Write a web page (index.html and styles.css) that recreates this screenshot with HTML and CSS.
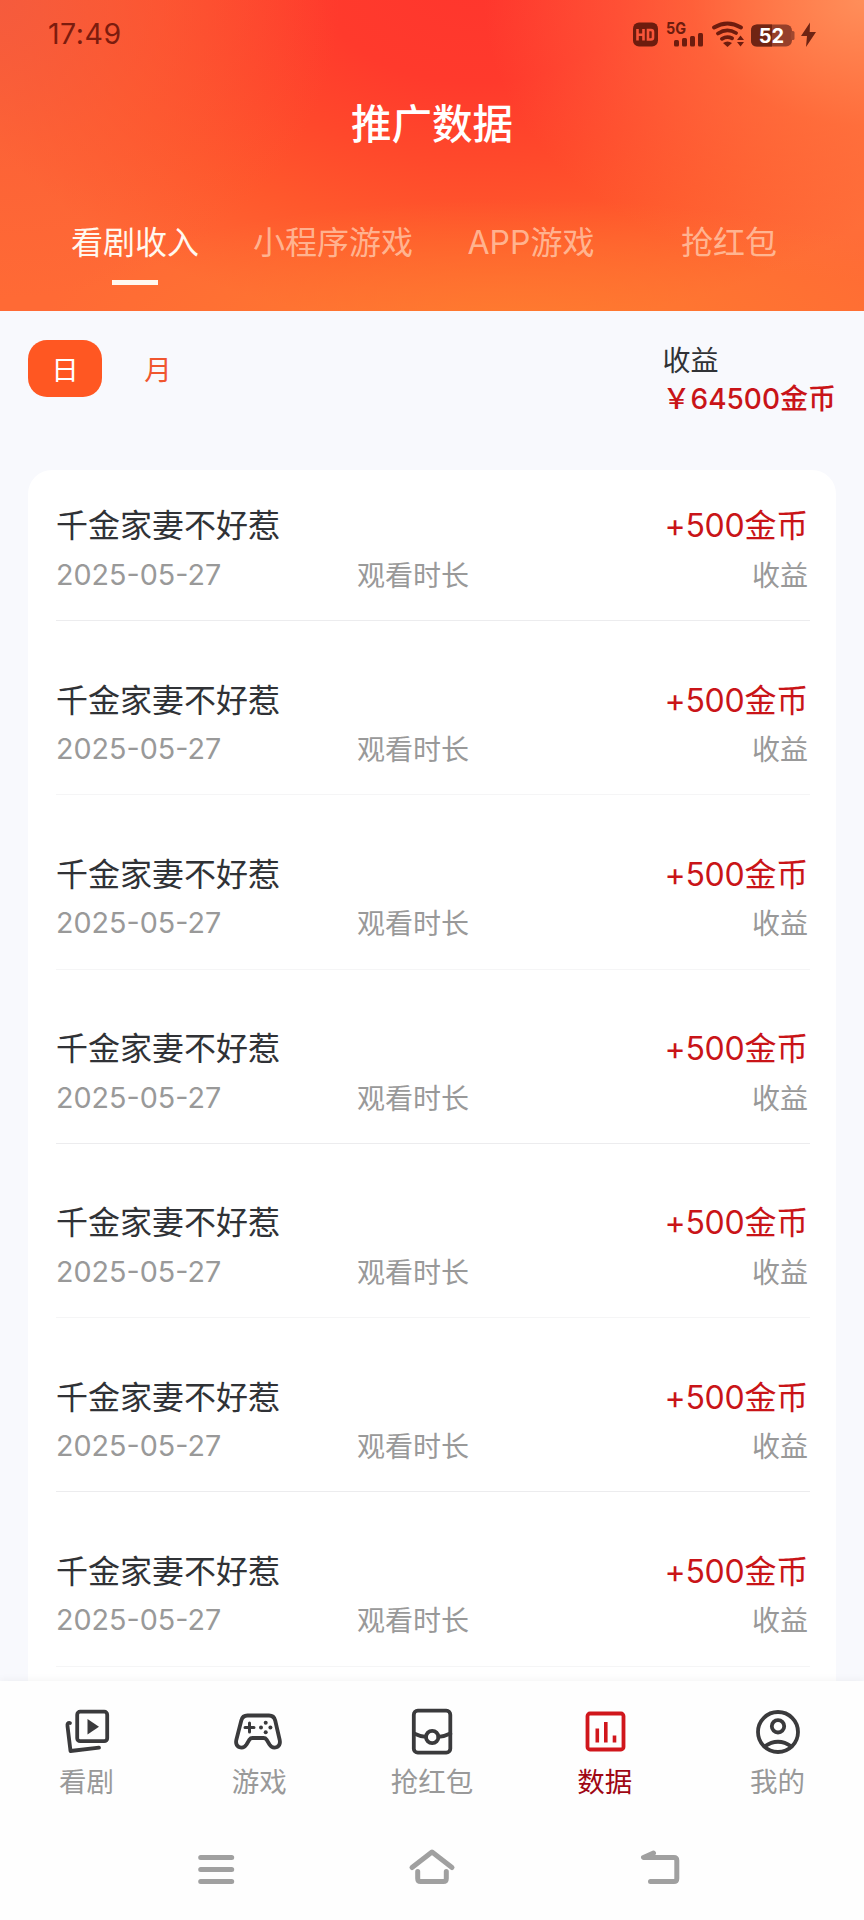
FILE: index.html
```html
<!DOCTYPE html>
<html lang="zh-CN">
<head>
<meta charset="utf-8">
<title>推广数据</title>
<link rel="stylesheet" href="styles.css">
</head>
<body>
<div class="app">
  <header class="hero">
    <div class="status">
      <span class="clock">17:49</span>
      <svg class="status-icons" viewBox="0 0 190 30" width="190" height="30">
        <g fill="#6e1c0e">
          <rect x="1" y="3.500" width="25" height="24" rx="6"/>
          <rect x="42" y="21" width="5" height="6.500" rx="1.500"/>
          <rect x="50" y="19" width="5" height="8.500" rx="1.500"/>
          <rect x="58" y="17" width="5" height="10.500" rx="1.500"/>
          <rect x="66" y="14" width="5" height="13.500" rx="1.500"/>
          <path d="M91 24l4.500 4 4.500-4q-4.500-3-9 0z"/>
          <path d="M105 21l3.500-4.500 3.500 4.500zM105 23l3.500 4.500 3.500-4.500z"/>
        </g>
        <path d="M5.500 10v11.500M11.500 10v11.500M5.500 15.800h6M16 11h3q2 0 2 2v5.500q0 2-2 2h-3z" fill="none" stroke="#f9553a" stroke-width="2.600"/>
        <text class="net" x="34" y="15" textLength="20" lengthAdjust="spacingAndGlyphs">5G</text>
        <g fill="none" stroke="#6e1c0e" stroke-width="3.800" stroke-linecap="round">
          <path d="M82 8.500q13.500-8 27 0M86 14.500q9-6 18-.5M90 19.800q5-3 10-.5"/>
        </g>
        <rect x="119" y="5.500" width="41" height="22" rx="6" fill="#96402a"/>
        <path d="M125 5.500h15v22h-15q-6 0-6-6v-10q0-6 6-6z" fill="#702413"/>
        <rect x="159" y="12" width="3.500" height="9" rx="1.500" fill="#a04830"/>
        <text class="level" x="139.500" y="23.700">52</text>
        <path d="M178 3.500l-9 13.500h6l-1 11 10-15h-6.300z" fill="#6e2413"/>
      </svg>
    </div>
    <h1 class="title">推广数据</h1>
    <nav class="tabs">
      <span class="tab on">看剧收入</span>
      <span class="tab">小程序游戏</span>
      <span class="tab">APP游戏</span>
      <span class="tab">抢红包</span>
    </nav>
  </header>

  <section class="summary">
    <div class="periods">
      <span class="period on">日</span>
      <span class="period">月</span>
    </div>
    <div class="total">
      <span>收益</span>
      <strong class="total-sum">&#xFFE5;64500金币</strong>
    </div>
  </section>

  <main class="list">
    <article class="row strong"><div class="name">千金家妻不好惹</div><div class="gain">+500金币</div><div class="date">2025-05-27</div><div class="watch">观看时长</div><div class="label">收益</div></article>
    <article class="row"><div class="name">千金家妻不好惹</div><div class="gain">+500金币</div><div class="date">2025-05-27</div><div class="watch">观看时长</div><div class="label">收益</div></article>
    <article class="row"><div class="name">千金家妻不好惹</div><div class="gain">+500金币</div><div class="date">2025-05-27</div><div class="watch">观看时长</div><div class="label">收益</div></article>
    <article class="row strong"><div class="name">千金家妻不好惹</div><div class="gain">+500金币</div><div class="date">2025-05-27</div><div class="watch">观看时长</div><div class="label">收益</div></article>
    <article class="row"><div class="name">千金家妻不好惹</div><div class="gain">+500金币</div><div class="date">2025-05-27</div><div class="watch">观看时长</div><div class="label">收益</div></article>
    <article class="row strong"><div class="name">千金家妻不好惹</div><div class="gain">+500金币</div><div class="date">2025-05-27</div><div class="watch">观看时长</div><div class="label">收益</div></article>
    <article class="row"><div class="name">千金家妻不好惹</div><div class="gain">+500金币</div><div class="date">2025-05-27</div><div class="watch">观看时长</div><div class="label">收益</div></article>
  </main>

  <footer class="bottom">
    <nav class="tabbar">
      <a class="item">
        <svg class="icon" viewBox="0 0 52 52">
          <rect x="17.200" y="10.700" width="30" height="29.500" rx="3"/>
          <path d="M10 22q-3-.5-2.500 3l3 25 28.500-3.300"/>
          <path class="solid" d="M27.500 18v15.500l11.500-7.750z"/>
        </svg>
        <span>看剧</span>
      </a>
      <a class="item">
        <svg class="icon" viewBox="0 0 52 52">
          <path d="M14.500 14.500H36q5 0 6.200 5l4.500 19.500q1 5-2.600 7-4.600 2-7.600-2.500l-3-5q-1-1.500-3-1.500H19.500q-2 0-3 1.500l-3 5q-3 4.500-7.600 2.500-3.600-2-2.600-7l5-19.500q1.200-5 6.200-5z"/>
          <path d="M12 26.500h9M16.500 22v9" stroke-width="3"/>
          <g class="solid"><circle cx="32.700" cy="21.800" r="2"/><circle cx="32.700" cy="31.200" r="2"/><circle cx="28" cy="26.500" r="2"/><circle cx="37.400" cy="26.500" r="2"/></g>
        </svg>
        <span>游戏</span>
      </a>
      <a class="item">
        <svg class="icon" viewBox="0 0 52 52">
          <rect x="7.800" y="9.700" width="36.500" height="42" rx="4"/>
          <circle cx="26.200" cy="36" r="6.200"/>
          <path d="M8 32.500q6 3 12 3.300M32.400 35.800q6-.3 12-3.300"/>
        </svg>
        <span>抢红包</span>
      </a>
      <a class="item on">
        <svg class="icon" viewBox="0 0 52 52">
          <rect x="8.500" y="12.500" width="36" height="36" rx="2.500"/>
          <path d="M18.300 27.500v14M26.800 21v20.500M35.500 34.500v7" stroke-width="3.600"/>
        </svg>
        <span>数据</span>
      </a>
      <a class="item">
        <svg class="icon" viewBox="0 0 52 52">
          <circle cx="26" cy="31" r="20"/>
          <circle cx="26" cy="25.300" r="6.200"/>
          <path d="M12.500 45.500q13.500-9.500 27 0"/>
        </svg>
        <span>我的</span>
      </a>
    </nav>
    <nav class="sysnav">
      <svg viewBox="0 0 48 48"><path d="M8.700 12.500h31M8.700 24.500h31M8.700 36.500h31"/></svg>
      <svg viewBox="0 0 48 48"><path d="M4 22.500L24 7l20 15.500M9.700 26.500v7q0 3 3 3h22.600q3 0 3-3v-7"/></svg>
      <svg viewBox="0 0 48 48"><path d="M17.500 8L7.500 12.500h30.300q3 0 3 3v18q0 3-3 3H14.500"/></svg>
    </nav>
  </footer>
</div>
</body>
</html>
```

FILE: styles.css
```css
* { box-sizing: border-box; }

body {
  margin: 0;
  font-family: Inter, "Noto Sans CJK SC", sans-serif;
  background: #f8f9fd;
}

.app {
  width: 864px;
  height: 1920px;
  overflow: hidden;
  display: flex;
  flex-direction: column;
  background: #f8f9fd;
}

.hero {
  height: 311px;
  flex: none;
  background:
    radial-gradient(ellipse 380px 280px at 100% 0, rgba(255, 142, 90, 1), rgba(255, 126, 72, .5) 45%, rgba(255, 120, 65, 0)),
    radial-gradient(ellipse 340px 300px at 0 0, rgba(244, 90, 62, .9), rgba(250, 92, 56, .5) 50%, rgba(250, 92, 56, 0)),
    radial-gradient(ellipse 480px 130px at 60% 106%, rgba(255, 126, 46, .9), rgba(255, 122, 50, 0)),
    radial-gradient(ellipse 540px 340px at 55% -4%, #ff362d 0, #ff3a2c 28%, #ff482b 50%, #ff582c 72%, rgba(255, 106, 52, 0) 100%),
    #ff6a35;
}

.status {
  height: 66px;
  padding: 0 42px 0 48px;
  display: flex;
  align-items: center;
  justify-content: space-between;
}
.clock { font-size: 28.500px; color: #7c1c0e; letter-spacing: .5px; }
.status-icons { margin-top: 1px; }
.net { font: 700 16px Inter, sans-serif; fill: #6e1c0e; }
.level { font: 700 20px Inter, sans-serif; fill: #fff; text-anchor: middle; }

.title {
  margin: 29px 0 0;
  font-size: 40.500px;
  line-height: 60px;
  font-weight: 500;
  color: #fff;
  text-align: center;
}

.tabs {
  display: grid;
  grid-template-columns: repeat(4, 198px);
  justify-content: center;
  margin-top: 64px;
}
.tab {
  font-size: 32px;
  line-height: 48px;
  text-align: center;
  color: rgba(255, 220, 195, .68);
}
.tab.on { color: #fff8ef; }
.tab.on::after {
  content: "";
  display: block;
  width: 46px;
  height: 5px;
  margin: 13px auto 0;
  background: #fff8ef;
}

.summary {
  height: 159px;
  flex: none;
  padding: 29px 28px 0;
  display: flex;
  justify-content: space-between;
  color: #303236;
}
.periods { display: flex; gap: 19px; }
.period {
  width: 74px;
  height: 57px;
  border-radius: 19px;
  font-size: 27.500px;
  line-height: 60px;
  text-align: center;
  color: #f0562f;
}
.period.on { background: #ff5722; color: #fff; }
.total { display: flex; flex-direction: column; padding-top: 2px; font-size: 28px; line-height: 38px; }
.total-sum { font-weight: 500; color: #c91418; }

.list {
  flex: 1;
  min-height: 0;
  overflow: hidden;
  margin: 0 28px;
  border-radius: 24px 24px 0 0;
  background: #fff;
}
.row {
  height: 174.300px;
  margin: 0 26px 0 28px;
  padding: 52.500px 2px 0 0;
  display: grid;
  grid-template-columns: 301px 1fr auto;
  grid-template-rows: 48px 53px;
  align-items: center;
  border-bottom: 1px solid #f5f5f6;
  color: #999;
  font-size: 28px;
}
.row:first-child { height: 151px; padding-top: 29px; }
.row.strong { border-color: #ececee; }
.name { font-size: 32px; color: #303236; grid-column: 1 / 3; }
.gain { font-size: 32px; letter-spacing: -.25px; color: #c91418; text-align: right; }
.date { font-size: 28.700px; padding-top: 1px; }
.label { text-align: right; }

.bottom {
  height: 239px;
  flex: none;
  background: #fefefe;
  box-shadow: 0 -1px 8px rgba(0, 0, 0, .05);
}
.tabbar {
  display: grid;
  grid-template-columns: repeat(5, 1fr);
  padding-top: 18px;
}
.item {
  display: flex;
  flex-direction: column;
  align-items: center;
  font-size: 27.500px;
  line-height: 40px;
  color: #999;
}
.icon {
  width: 52px;
  height: 56px;
  margin-bottom: 7px;
  fill: none;
  stroke: #3a3a3c;
  stroke-width: 3.800;
  stroke-linecap: round;
  stroke-linejoin: round;
  overflow: visible;
}
.icon .solid { fill: #3a3a3c; stroke: none; }
.item.on { color: #9f0714; }
.item.on .icon { stroke: #d0161c; stroke-linecap: butt; }

.sysnav {
  display: grid;
  grid-template-columns: 216px 228px 48px;
  padding: 43px 0 0 192px;
}
.sysnav svg {
  width: 48px;
  height: 48px;
  fill: none;
  stroke: #a0a0a0;
  stroke-width: 5;
  stroke-linecap: round;
  stroke-linejoin: round;
}
```
